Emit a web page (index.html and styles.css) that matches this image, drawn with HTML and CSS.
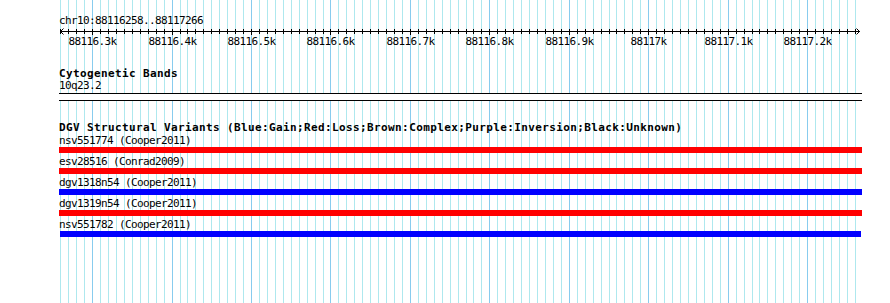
FILE: index.html
```html
<!DOCTYPE html>
<html>

	<head>
		<meta charset="UTF-8">
		<title>chr10:88116258..88117266</title>
		<link rel="stylesheet" href="styles.css">
	</head>

	<body>
		<div id="panel">
			<!--grid behind all tracks-->
			<svg id="grid" width="803" height="303"></svg>

			<div class="pos">chr10:88116258..88117266</div>
			<svg id="ruler" width="803" height="22"></svg>

			<!--cytoband-->
			<div class="track" id="cytoband">
				<div class="track-title">Cytogenetic Bands</div>
				<div class="label">10q23.2</div>
				<div class="band"></div>
			</div>

			<!--DGV-->
			<div class="track" id="dgv">
				<div class="track-title">DGV Structural Variants (Blue:Gain;Red:Loss;Brown:Complex;Purple:Inversion;Black:Unknown)</div>
				<div class="feature">
					<div class="label">nsv551774 (Cooper2011)</div>
					<div class="bar loss"></div>
				</div>
				<div class="feature">
					<div class="label">esv28516 (Conrad2009)</div>
					<div class="bar loss"></div>
				</div>
				<div class="feature">
					<div class="label">dgv1318n54 (Cooper2011)</div>
					<div class="bar gain"></div>
				</div>
				<div class="feature">
					<div class="label">dgv1319n54 (Cooper2011)</div>
					<div class="bar loss"></div>
				</div>
				<div class="feature">
					<div class="label">nsv551782 (Cooper2011)</div>
					<div class="bar gain short"></div>
				</div>
			</div>
		</div>
		<script src="app.js"></script>
	</body>

</html>
```

FILE: styles.css
```css
* {
	margin: 0;
	padding: 0;
}

body,
html {
	height: 100%;
	background: #fff;
}

body {
	font-family: "DejaVu Sans Mono", monospace;
	font-size: 11px;
	line-height: 12px;
	letter-spacing: -0.62px;
	color: #000;
	overflow: hidden;
}

#panel {
	position: relative;
	isolation: isolate;
	width: 803px;
	height: 303px;
	margin-left: 59px;
	padding-top: 15px;
	box-sizing: border-box;
}

#grid {
	position: absolute;
	left: 0;
	top: 0;
	z-index: -1;
}

#ruler {
	display: block;
}

.pos,
.label {
	white-space: nowrap;
}

.track-title {
	font-weight: bold;
	letter-spacing: 0.38px;
	white-space: nowrap;
}

#cytoband {
	margin-top: 19px;
}

.band {
	height: 6px;
	margin-top: 1px;
	border-top: 1px solid #000;
	border-bottom: 1px solid #000;
	background: #fff;
}

#dgv {
	margin-top: 21px;
}

#dgv .track-title {
	margin-bottom: 1px;
}

.feature {
	margin-bottom: 3px;
}

.bar {
	height: 6px;
}

.bar.short {
	margin: 0 1px;
}

.loss {
	background: #f00;
}

.gain {
	background: #00f;
}
```

FILE: app.js
```js
var START = 88116258;
var SCALE = 0.7944;
var NS = "http://www.w3.org/2000/svg";

function px(pos) {
	return Math.floor(0.3 + (pos - START) * SCALE);
}

function add(svg, tag, attrs, text) {
	var el = document.createElementNS(NS, tag);
	for (var k in attrs) {
		el.setAttribute(k, attrs[k]);
	}
	if (text) el.textContent = text;
	svg.appendChild(el);
	return el;
}

var grid = document.getElementById("grid");
var ruler = document.getElementById("ruler");

// ruler line + arrows
add(ruler, "rect", { x: 1, y: 4, width: 800, height: 1, fill: "#000" });
add(ruler, "path", { d: "M4.5 1.5 L1.5 4.5 L4.5 7.5", stroke: "#000", fill: "none" });
add(ruler, "path", { d: "M797.5 1.5 L800.5 4.5 L797.5 7.5", stroke: "#000", fill: "none" });

for (var pos = 88116260; pos <= 88117260; pos += 10) {
	var x = px(pos);
	var major = pos % 100 == 0;
	add(grid, "rect", { x: x, y: 0, width: 1, height: 303, fill: major ? "#88ccee" : "#aee8ee" });
	add(ruler, "rect", { x: x, y: 2, width: 1, height: major ? 6 : 5, fill: "#000" });
	if (major) {
		add(ruler, "text", { x: x + 0.5, y: 18, "text-anchor": "middle", fill: "#000" }, (pos / 1000) + "k");
	}
}
```
